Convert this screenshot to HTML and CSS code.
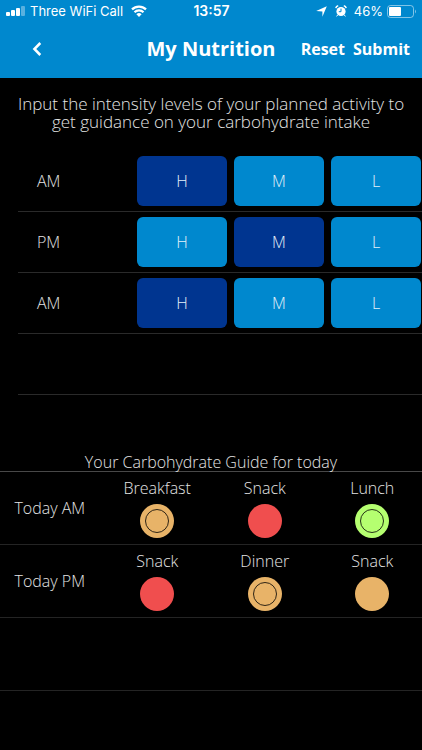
FILE: index.html
```html
<!DOCTYPE html>
<html lang="en">

<head>
  <meta charset="utf-8">
  <title>My Nutrition</title>
  <meta name="viewport" content="width=device-width, initial-scale=1">
  <link rel="stylesheet" href="styles.css">
</head>

<body>

  <header class="header">
    <div class="status">
      <div class="status-left">
        <svg width="20" height="10" viewBox="0 0 20 10" fill="#fff">
          <rect x="0" y="6" width="4" height="4" rx="1" />
          <rect x="5" y="4" width="4" height="6" rx="1" />
          <rect x="10" y="2" width="4" height="8" rx="1" />
          <rect x="15" y="0" width="4" height="10" rx="1" opacity=".35" />
        </svg>
        <span>Three WiFi Call</span>
        <svg class="wifi" width="16" height="12" viewBox="0 0 16 12" fill="none" stroke="#fff" stroke-width="2.2">
          <path d="M1 4.4a10 10 0 0 1 14 0M3.5 7.3a6.3 6.3 0 0 1 9 0" />
          <path d="M5.4 9.3a3.6 3.6 0 0 1 5.2 0L8 12z" fill="#fff" stroke="none" />
        </svg>
      </div>
      <span class="clock">13:57</span>
      <div class="status-right">
        <svg width="11" height="11" viewBox="0 0 11 11" fill="#fff">
          <path d="M10.8.2L6.4 10.8V5.6L.2 5z" />
        </svg>
        <svg class="alarm" width="12" height="12" viewBox="0 0 12 12" fill="none" stroke="#fff">
          <circle cx="6" cy="6.5" r="4.6" fill="#fff" stroke="none" />
          <path d="M.8 3.2A3 3 0 0 1 3.2.8M8.8.8a3 3 0 0 1 2.4 2.4" stroke-width="1.5" />
          <path d="M2.8 9.8l-1.2 1.6M9.2 9.8l1.2 1.6" />
          <path d="M6 3.6v3.1H3.8" stroke="#0088ce" />
        </svg>
        <span>46%</span>
        <svg class="battery" width="30" height="13" viewBox="0 0 30 13">
          <rect x=".5" y=".5" width="26" height="12" rx="3" fill="none" stroke="#fff" opacity=".5" />
          <rect x="2" y="2" width="12" height="9" rx="1" fill="#fff" />
          <path d="M28 4.5q2 2 0 4z" fill="#fff" opacity=".5" />
        </svg>
      </div>
    </div>
    <div class="navbar">
      <button type="button" class="back" aria-label="Back">
        <svg width="10" height="14" viewBox="0 0 10 14" fill="none" stroke="#fff" stroke-width="2.5">
          <path d="M8.3 1L2.4 7l5.9 6" />
        </svg>
      </button>
      <h1>My Nutrition</h1>
      <div class="actions">
        <button type="button" id="reset">Reset</button>
        <button type="button">Submit</button>
      </div>
    </div>
  </header>

  <main>
    <p class="intro">Input the intensity levels of your planned activity to get guidance on your carbohydrate intake</p>

    <div class="levels">
      <div class="level">
        <span>AM</span>
        <button type="button" class="selected">H</button>
        <button type="button">M</button>
        <button type="button">L</button>
      </div>
      <div class="level">
        <span>PM</span>
        <button type="button">H</button>
        <button type="button" class="selected">M</button>
        <button type="button">L</button>
      </div>
      <div class="level">
        <span>AM</span>
        <button type="button" class="selected">H</button>
        <button type="button">M</button>
        <button type="button">L</button>
      </div>
      <div class="level"></div>
    </div>

    <section class="guide">
      <h2>Your Carbohydrate Guide for today</h2>
      <table>
        <tr>
          <th scope="row">Today AM</th>
          <td>Breakfast<span class="dot medium ring"></span></td>
          <td>Snack<span class="dot low"></span></td>
          <td>Lunch<span class="dot high ring"></span></td>
        </tr>
        <tr>
          <th scope="row">Today PM</th>
          <td>Snack<span class="dot low"></span></td>
          <td>Dinner<span class="dot medium ring"></span></td>
          <td>Snack<span class="dot medium"></span></td>
        </tr>
        <tr>
          <td colspan="4"></td>
        </tr>
      </table>
    </section>
  </main>

  <script>
    // Only one level can be selected in each row
    var levels = document.querySelector('.levels');
    levels.addEventListener('click', function (e) {
      if (e.target.tagName === 'BUTTON') {
        var old = e.target.parentNode.querySelector('.selected');
        if (old) old.classList.remove('selected');
        e.target.classList.add('selected');
      }
    });

    document.getElementById('reset').onclick = function () {
      var selected = levels.querySelectorAll('.selected');
      for (var i = 0; i < selected.length; i++) {
        selected[i].classList.remove('selected');
      }
    };
  </script>

</body>

</html>
```

FILE: styles.css
```css
*,
*::before {
  box-sizing: border-box;
}

body {
  margin: 0;
  background: #000;
  color: #e4e4e4;
  font-family: "Open Sans", "Noto Sans", sans-serif;
  font-size: 16px;
  font-weight: 300;
  line-height: 18px;
}

button {
  padding: 0;
  border: none;
  background: none;
  color: #fff;
  font: inherit;
  cursor: pointer;
}

svg {
  display: block;
}

/* Header */
.header {
  height: 78px;
  background: #0088ce;
  color: #fff;
}

.status {
  display: grid;
  grid-template-columns: 1fr auto 1fr;
  align-items: center;
  height: 22px;
  padding: 0 5px 0 6px;
  font-family: Inter, sans-serif;
  font-size: 13px;
  font-weight: 400;
}

.status-left,
.status-right {
  display: flex;
  align-items: center;
  gap: 4px;
}

.status-right {
  justify-content: flex-end;
}

.wifi {
  margin-left: 4px;
}

.alarm {
  margin: 0 3px 0 4px;
}

.clock {
  font-size: 14px;
  font-weight: 600;
}

.navbar {
  display: grid;
  grid-template-columns: 1fr auto 1fr;
  align-items: center;
  height: 54px;
  padding: 0 12px;
}

.back {
  justify-self: start;
  padding: 10px 20px;
}

.navbar h1 {
  margin: 0;
  font-size: 20px;
  font-weight: 700;
}

.actions {
  display: flex;
  justify-content: flex-end;
  gap: 8px;
  font-size: 16px;
  font-weight: 700;
}

/* Intensity levels */
.intro {
  margin: 0;
  padding: 17px 16px 20px;
  font-size: 17px;
  text-align: center;
}

.levels {
  margin-left: 18px;
}

.level {
  display: flex;
  align-items: center;
  gap: 7px;
  height: 61px;
  padding-right: 1px;
  border-bottom: 1px solid #2a2a2a;
}

.level span {
  width: 112px;
  padding-left: 19px;
}

.level button {
  flex: 1;
  height: 50px;
  border-radius: 6px;
  background: #0088ce;
  color: #e4f2fa;
}

.level .selected {
  background: #003590;
}

/* Carbohydrate guide */
.guide {
  margin-top: 50px;
  padding-top: 8px;
  overflow: hidden;
}

.guide h2 {
  margin: 0;
  font-size: 16px;
  font-weight: 300;
  text-align: center;
}

/* the columns run a little past both edges of the screen */
.guide table {
  width: calc(100% + 8px);
  margin: 0 -4px;
  border-collapse: collapse;
  border-top: 1px solid #484848;
  table-layout: fixed;
}

.guide tr {
  height: 73px;
  border-bottom: 1px solid #242424;
}

.guide th,
.guide td {
  padding: 0;
  font-weight: 300;
  text-align: center;
}

.dot {
  display: block;
  width: 34px;
  height: 34px;
  margin: 7px auto 0;
  padding: 5px;
  border-radius: 50%;
}

.ring::before {
  content: "";
  display: block;
  height: 24px;
  border: 1px solid rgba(0, 0, 0, 0.8);
  border-radius: 50%;
}

.high {
  background: #b5ff70;
}

.medium {
  background: #e8b368;
}

.low {
  background: #f04e4e;
}
```
